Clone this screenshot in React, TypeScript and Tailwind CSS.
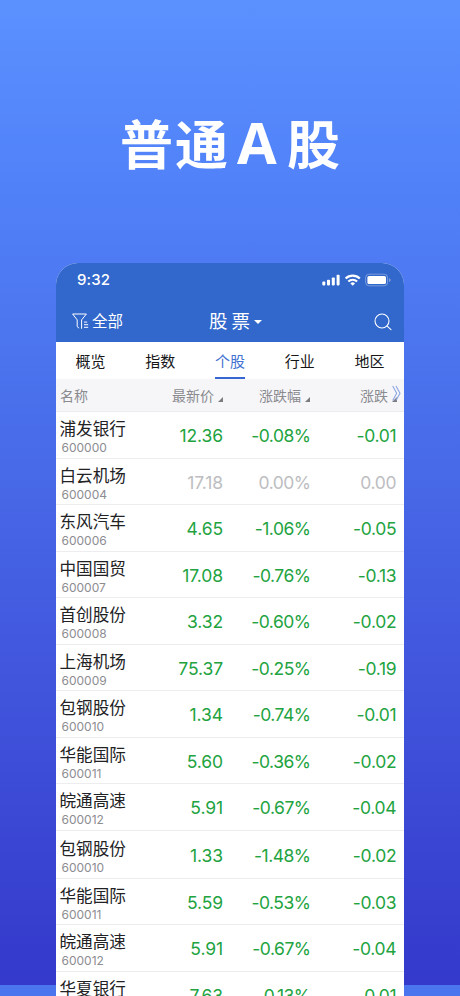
type Row = { name: string; code: string; price: string; pct: string; chg: string; flat?: boolean; tall?: boolean };

const rows: Row[] = [
  { name: '浦发银行', code: '600000', price: '12.36', pct: '-0.08%', chg: '-0.01' },
  { name: '白云机场', code: '600004', price: '17.18', pct: '0.00%', chg: '0.00', flat: true },
  { name: '东风汽车', code: '600006', price: '4.65', pct: '-1.06%', chg: '-0.05' },
  { name: '中国国贸', code: '600007', price: '17.08', pct: '-0.76%', chg: '-0.13' },
  { name: '首创股份', code: '600008', price: '3.32', pct: '-0.60%', chg: '-0.02' },
  { name: '上海机场', code: '600009', price: '75.37', pct: '-0.25%', chg: '-0.19' },
  { name: '包钢股份', code: '600010', price: '1.34', pct: '-0.74%', chg: '-0.01' },
  { name: '华能国际', code: '600011', price: '5.60', pct: '-0.36%', chg: '-0.02' },
  { name: '皖通高速', code: '600012', price: '5.91', pct: '-0.67%', chg: '-0.04' },
  { name: '包钢股份', code: '600010', price: '1.33', pct: '-1.48%', chg: '-0.02', tall: true },
  { name: '华能国际', code: '600011', price: '5.59', pct: '-0.53%', chg: '-0.03' },
  { name: '皖通高速', code: '600012', price: '5.91', pct: '-0.67%', chg: '-0.04' },
  { name: '华夏银行', code: '600015', price: '7.63', pct: '-0.13%', chg: '-0.01' },
];

const tabs = ['概览', '指数', '个股', '行业', '地区'];

function StatusIcons() {
  return (
    <svg width="70" height="14" viewBox="0 0 70 14" fill="white">
      <rect x="0.3" y="8.6" width="3" height="3.8" rx="0.8" />
      <rect x="5" y="6.8" width="3" height="5.6" rx="0.8" />
      <rect x="9.8" y="4.5" width="3" height="7.9" rx="0.8" />
      <rect x="14.6" y="1.8" width="3" height="10.6" rx="0.8" />
      <g fill="none" stroke="white" strokeWidth="2.1">
        <path d="M23.6 5.6a10 10 0 0 1 14.2 0" />
        <path d="M26.3 8.6a6.2 6.2 0 0 1 8.8 0" />
      </g>
      <path d="M28.4 10.4a3.4 3.4 0 0 1 4.6 0l-2.3 2.3z" />
      <rect x="43.6" y="1.2" width="22" height="11.6" rx="3.4" fill="none" stroke="white" strokeOpacity="0.35" />
      <rect x="45.4" y="3" width="18.6" height="8" rx="1.6" />
      <path d="M67.1 5.2c1 .4 1.6 1 1.6 1.9s-.6 1.5-1.6 1.9z" fillOpacity="0.4" />
    </svg>
  );
}

function FilterIcon() {
  return (
    <svg width="18" height="17" viewBox="0 0 18 17" fill="none" stroke="white" strokeWidth="1" strokeLinejoin="round">
      <path d="M5.2 13.6V6.9L0.6 1h13.8L9.6 6.9V15.8" />
      <path d="M5.2 13.6l1.9 1.6" />
      <path d="M12 9.1h3.2M12 11.7h4.2M12 14.3h4.2" />
    </svg>
  );
}

function SortMark() {
  return (
    <svg className="mt-2 ml-1 shrink-0" width="5" height="5" viewBox="0 0 5 5" fill="#7b7b80">
      <path d="M5 0v5H0z" />
    </svg>
  );
}

export default function App() {
  return (
    <div
      lang="zh-CN"
      className="flex h-[996px] w-[460px] flex-col items-center overflow-hidden bg-[linear-gradient(180deg,#5b91ff_0px,#5080f8_200px,#4a70ec_400px,#4053db_700px,#3439cb_985px,#4a75ee_985px,#4a75ee_996px)] font-['Inter','Noto_Sans_CJK_SC',sans-serif]"
    >
      <h1 className="flex h-[263px] w-full shrink-0 pl-[120px] pt-[103px] font-['Noto_Sans_CJK_SC',sans-serif] text-[53px] font-bold leading-[78px] text-white">
        <span className="w-[117px] tracking-[2px]">普通</span>
        <span className="w-[50px] font-['Open_Sans','Noto_Sans_CJK_SC',sans-serif] text-[57.5px]">A</span>
        <span>股</span>
      </h1>
      <main className="flex w-[348px] flex-1 shrink-0 flex-col overflow-hidden rounded-t-[22px] bg-white">
        <header className="h-[79px] shrink-0 bg-[#3267cb] text-white">
          <div className="flex h-[34px] items-center justify-between pl-[21px] pr-[12px]">
            <span className="text-[15px] font-medium tracking-[0.1px]">9:32</span>
            <StatusIcons />
          </div>
          <div className="grid h-[49px] grid-cols-[1fr_auto_1fr] items-center">
            <div className="flex items-center pl-4 text-[15.5px]">
              <FilterIcon />
              <span className="ml-[2px] pt-px">全部</span>
            </div>
            <div className="flex items-center pl-[11px] text-[18.5px]">
              <span>股</span>
              <span className="ml-[4px]">票</span>
              <svg className="ml-[4px]" width="8" height="4" viewBox="0 0 8 4" fill="white">
                <path d="M0 0h8L4 4z" />
              </svg>
            </div>
            <div className="flex justify-end pr-[12px]">
              <svg width="18" height="18" viewBox="0 0 18 18" fill="none" stroke="white" strokeWidth="1.1" strokeLinecap="round">
                <circle cx="8" cy="8" r="7" />
                <path d="M13.1 13.1l3.9 3.6" />
              </svg>
            </div>
          </div>
        </header>
        <nav className="flex h-[37px] shrink-0 justify-between px-[19.5px] text-[15px] text-[#161618]">
          {tabs.map((t) => (
            <span
              key={t}
              className={
                t === '个股'
                  ? 'h-[37px] border-b-2 border-[#3566d2] leading-[39px] text-[#4373d2]'
                  : 'h-[37px] leading-[39px]'
              }
            >
              {t}
            </span>
          ))}
        </nav>
        <div className="grid h-[33px] shrink-0 grid-cols-[167px_87px_87px] border-b border-[#ececf0] bg-[#f6f6f9] text-[14px] leading-[33px] text-[#8a8a8f]">
          <div className="flex justify-between pl-[4px]">
            <span>名称</span>
            <span className="flex items-center">最新价<SortMark /></span>
          </div>
          <span className="flex items-center justify-end">涨跌幅<SortMark /></span>
          <span className="relative flex items-center justify-end">
            涨跌<SortMark />
            <svg className="absolute -right-[4px] top-[6px]" width="9" height="17" viewBox="0 0 9 17" fill="none" stroke="#8ba5e3" strokeWidth="1.1">
              <path d="M0.7 1l4 7.2-4 7.3M4 1l4 7.2-4 7.3" />
            </svg>
          </span>
        </div>
        {rows.map((r, i) => (
          <div
            key={i}
            className={
              (r.tall ? 'h-[48px] pt-[1.5px] ' : 'h-[46.5px] ') +
              'grid shrink-0 grid-cols-[100px_67px_87px_87px] border-b border-[#ededf0] ' +
              (r.flat ? 'text-[#bdbdc1]' : 'text-[#22a33f]')
            }
          >
            <div className="pl-[3.5px]">
              <div className="h-[29px] text-[16.6px] leading-[34px] text-[#222224]">{r.name}</div>
              <div className="pl-[2px] text-[12px] leading-[14px] text-[#8c8c91]">{r.code}</div>
            </div>
            <span className="text-right text-[17.5px] leading-[47px] tracking-[-0.1px]">{r.price}</span>
            <span className="-mr-[0.5px] text-right text-[17.5px] leading-[47px] tracking-[-0.5px]">{r.pct}</span>
            <span className="pr-[0.7px] text-right text-[17.5px] leading-[47px] tracking-[-0.3px]">{r.chg}</span>
          </div>
        ))}
      </main>
    </div>
  );
}
